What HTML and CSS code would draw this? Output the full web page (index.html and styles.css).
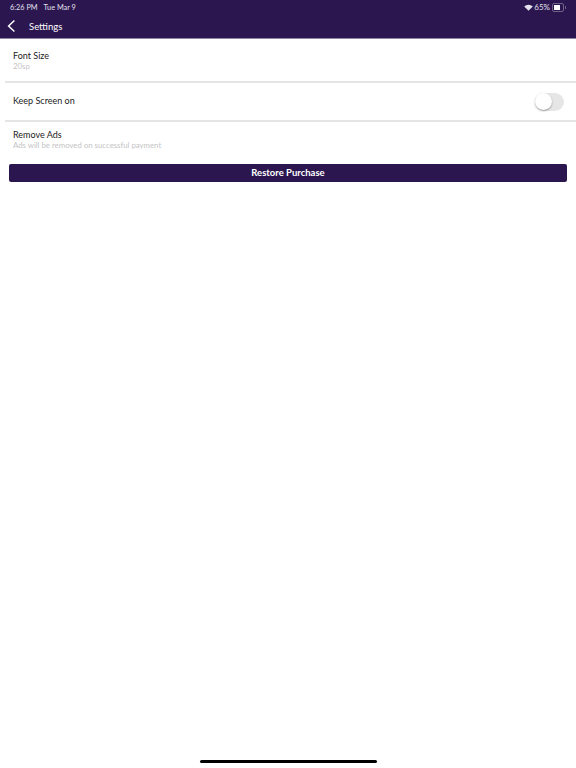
FILE: index.html
```html
<!DOCTYPE html>
<html lang="en">
<head>
  <meta charset="UTF-8">
  <meta name="viewport" content="width=device-width, initial-scale=1.0">
  <title>Settings</title>
  <link rel="stylesheet" href="styles.css">
</head>
<body>
  <div class="screen">
    <header class="header">
      <div class="status-bar">
        <div class="status-left">
          <span>6:26 PM</span>
          <span>Tue Mar 9</span>
        </div>
        <div class="status-right">
          <svg class="wifi" width="9" height="7" viewBox="0 0 9 7">
            <path d="M4.5 6.8 L0.2 2.4 A6.2 6.2 0 0 1 8.8 2.4 Z" fill="#e4e0ec"/>
          </svg>
          <span>65%</span>
          <div class="battery">
            <div class="battery-level"></div>
          </div>
          <div class="battery-tip"></div>
        </div>
      </div>
      <div class="nav-bar">
        <svg class="back" width="9" height="14" viewBox="0 0 9 14">
          <path d="M7.4 1.5 L1.6 7 L7.4 12.5" fill="none" stroke="#fff" stroke-width="1.5"/>
        </svg>
        <span class="nav-title">Settings</span>
      </div>
    </header>

    <main class="content">
      <div class="row row-font">
        <div class="row-title">Font Size</div>
        <div class="row-sub">20sp</div>
      </div>
      <div class="row row-screen">
        <div class="row-title">Keep Screen on</div>
        <div class="toggle"><div class="knob"></div></div>
      </div>
      <div class="row row-ads">
        <div class="row-title">Remove Ads</div>
        <div class="row-sub">Ads will be removed on successful payment</div>
      </div>
      <button class="restore">Restore Purchase</button>
    </main>

    <div class="home-bar"></div>
  </div>
</body>
</html>
```

FILE: styles.css
```css
body {
  margin: 0;
  font-family: Lato, "Liberation Sans", Arial, sans-serif;
  background: #fff;
  color: #222;
}

.screen {
  width: 576px;
  height: 768px;
  display: flex;
  flex-direction: column;
  overflow: hidden;
}

.header {
  height: 39px;
  box-sizing: border-box;
  background: #2b1650;
  border-bottom: 1px solid #8f84a6;
  color: #fff;
}

.status-bar {
  height: 14px;
  display: flex;
  justify-content: space-between;
  align-items: center;
  padding: 0 10px 0 10px;
  font-size: 7.3px;
  color: #e4e0ec;
}

.status-left {
  display: flex;
  gap: 6px;
}

.status-right {
  display: flex;
  align-items: center;
  gap: 1px;
  font-size: 8px;
}

.battery {
  width: 8px;
  height: 5px;
  margin-left: 1px;
  padding: 1px;
  border: 1px solid #6f6288;
  border-radius: 2px;
}

.battery-level {
  width: 75%;
  height: 100%;
  background: #fff;
}

.battery-tip {
  width: 1px;
  height: 3px;
  background: #6f6288;
}

.nav-bar {
  height: 24px;
  display: flex;
  align-items: center;
  gap: 13px;
  padding-left: 7px;
}

.nav-title {
  font-size: 9.5px;
}

.content {
  flex: 1;
  display: flex;
  flex-direction: column;
}

.row {
  margin-left: 5px;
  padding: 0 8px;
  box-sizing: border-box;
}

.row-font {
  height: 44px;
  padding-top: 11px;
  border-bottom: 2px solid #e5e5e5;
}

.row-screen {
  height: 39px;
  display: flex;
  justify-content: space-between;
  align-items: center;
  padding-right: 12px;
  border-bottom: 2px solid #e5e5e5;
}

.row-screen .row-title {
  margin-bottom: 2px;
}

.row-ads {
  height: 42px;
  padding-top: 7px;
}

.row-title {
  font-size: 9px;
  line-height: 11px;
}

.row-sub {
  font-size: 7.8px;
  line-height: 10px;
  color: #c4c4c4;
}

.toggle {
  width: 29px;
  height: 18px;
  box-sizing: border-box;
  background: #e6e6e6;
  border-radius: 9px;
}

.knob {
  width: 17px;
  height: 17px;
  background: #fff;
  border-radius: 50%;
  box-shadow: 0 1px 2px rgba(0, 0, 0, 0.35);
}

.restore {
  height: 18px;
  margin: 0 9px;
  padding: 0 0 1px;
  border: none;
  border-radius: 2px;
  background: #2b1650;
  color: #fff;
  font-family: inherit;
  font-size: 9.5px;
  font-weight: 700;
}

.home-bar {
  width: 177px;
  height: 3px;
  margin: 0 auto 5px;
  background: #000;
  border-radius: 2px;
}
```
